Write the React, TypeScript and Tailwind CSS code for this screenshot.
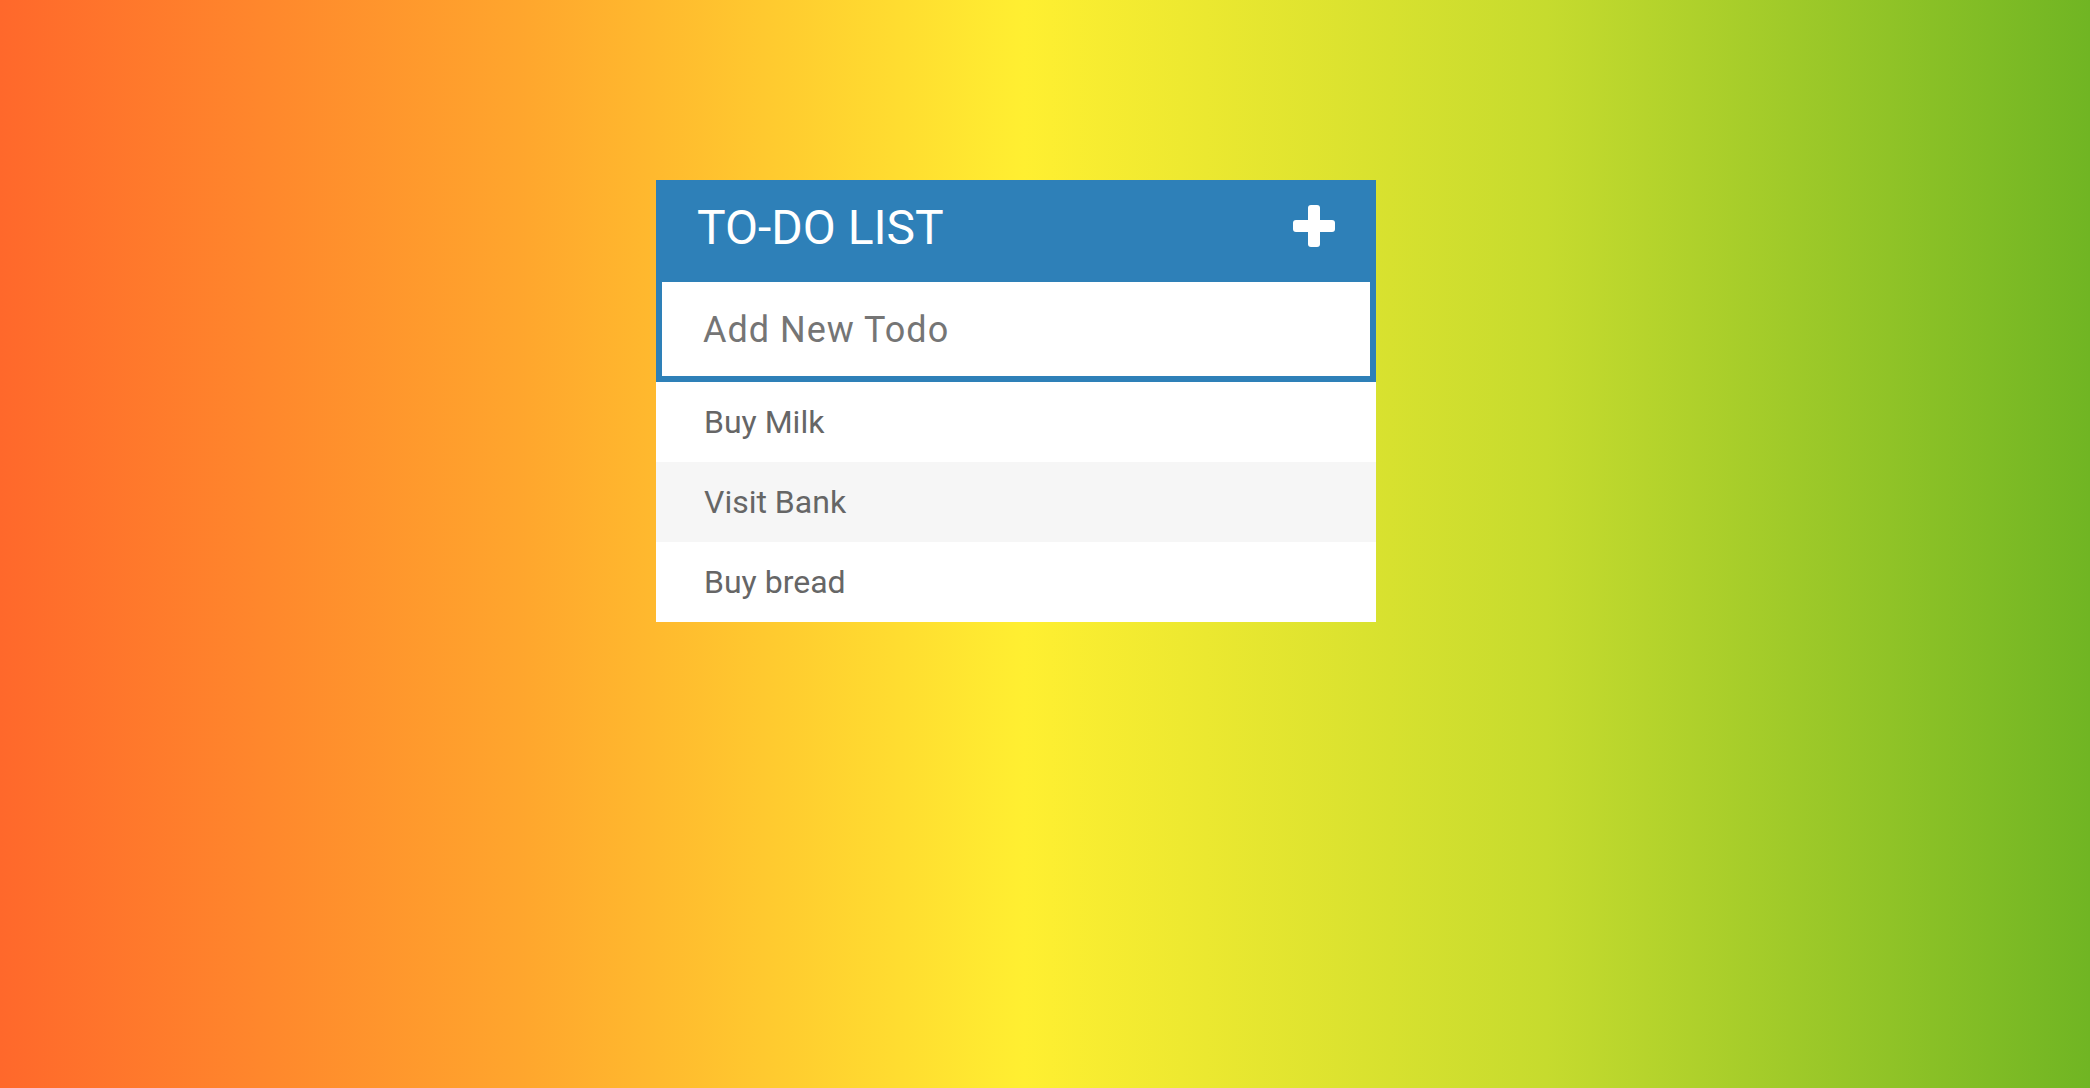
import React from "react";

const todos = ["Buy Milk", "Visit Bank", "Buy bread"];

export default function App() {
  return (
    <div
      className="w-full h-[1088px] overflow-hidden pt-[180px] pl-[656px] bg-[linear-gradient(to_right,#ff682b_0%,#ffa62d_25%,#ffef31_49%,#c6db2e_74%,#70b523_100%)]"
      style={{ fontFamily: "Roboto, 'Liberation Sans', sans-serif" }}
    >
      <div className="w-[720px] bg-white">
        <div className="h-[96px] bg-[#2e80b8] px-[41px] flex items-center justify-between">
          <h1 className="text-[48px] leading-none text-white font-normal">TO-DO LIST</h1>
          <svg width="42" height="42" viewBox="0 0 42 42" className="-mt-[5px]">
            <rect x="15" y="0" width="12" height="42" rx="3" fill="#fff" />
            <rect x="0" y="15" width="42" height="12" rx="3" fill="#fff" />
          </svg>
        </div>
        <div className="h-[106px] border-[6px] border-[#2e80b8] bg-white flex items-center pl-[41px]">
          <input
            type="text"
            placeholder="Add New Todo"
            className="w-full text-[36px] tracking-[1px] mt-[2px] text-[#333] placeholder:text-[#757575] outline-none bg-transparent"
            style={{ fontFamily: "Roboto, 'Liberation Sans', sans-serif" }}
          />
        </div>
        <ul>
          {todos.map((t, i) => (
            <li
              key={t}
              className={
                "h-[80px] flex items-center pl-[48px] text-[32px] text-[#666666] " +
                (i % 2 === 1 ? "bg-[#f6f6f6]" : "bg-white")
              }
            >
              {t}
            </li>
          ))}
        </ul>
      </div>
    </div>
  );
}
